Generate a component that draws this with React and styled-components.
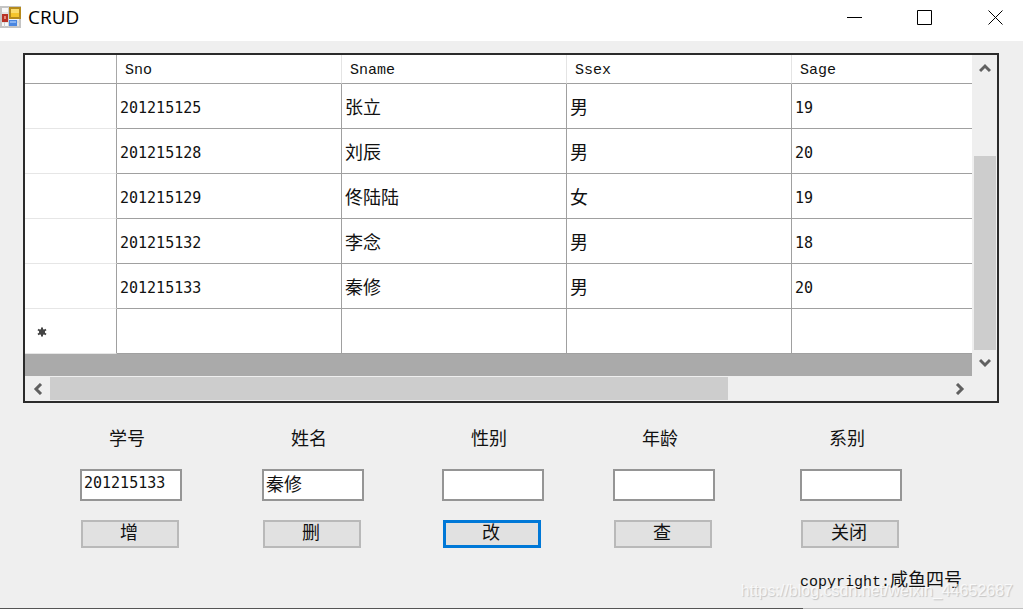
import React, { useState } from "react";
import styled, { createGlobalStyle } from "styled-components";

const GlobalStyle = createGlobalStyle`
  * {
    box-sizing: border-box;
  }
  body {
    margin: 0;
    background: #efefef;
    color: #111;
    font-family: "Liberation Mono", "Noto Sans CJK SC", monospace;
    font-size: 15px;
  }
`;

const Window = styled.div`
  display: flex;
  flex-direction: column;
  min-height: 100vh;
  overflow: hidden;
`;

const TitleBar = styled.header`
  display: flex;
  align-items: center;
  height: 41px;
  padding-bottom: 7px;
  background: #fff;
`;

const Title = styled.h1`
  flex: 1;
  margin: 0 0 0 7px;
  color: #000;
  font-family: "Open Sans", "Noto Sans", sans-serif;
  font-size: 19px;
  font-weight: 400;
  line-height: 24px;
`;

const WindowButtons = styled.div`
  display: flex;
`;

const WindowButton = styled.button`
  display: flex;
  align-items: center;
  justify-content: center;
  width: 70px;
  height: 34px;
  padding: 0;
  border: 0;
  background: none;
  &:last-child {
    width: 63px;
    padding-left: 8px;
  }
`;

const Content = styled.main`
  display: flex;
  flex: 1;
  flex-direction: column;
  padding: 12px 24px 12px 23px;
`;

const GridFrame = styled.section`
  display: grid;
  grid-template-columns: 1fr 25px;
  grid-template-rows: auto 25px;
  border: 2px solid #2b2b2b;
  background: #efefef;
`;

const GridView = styled.div`
  height: 321px;
  overflow: hidden;
  background: #aaa;
`;

const Table = styled.table`
  width: 100%;
  border-collapse: separate;
  border-spacing: 0;
  table-layout: fixed;
  background: #fff;
`;

const HeadCell = styled.th`
  width: ${(props) => (props.$marker ? "92px" : props.$last ? "auto" : "225px")};
  height: 29px;
  padding: 4px 8px 0;
  border-right: ${(props) =>
    props.$last ? "0" : `1px solid ${props.$marker ? "#a8a8a8" : "#e4e4e4"}`};
  border-bottom: 1px solid #a0a0a0;
  font-weight: 400;
  line-height: 20px;
  text-align: left;
`;

const RowMarker = styled.th`
  height: 45px;
  padding: 4px 12px 0;
  border-right: 1px solid #a0a0a0;
  border-bottom: 1px solid #e6e6e6;
  text-align: left;
`;

const Cell = styled.td`
  height: 45px;
  padding: 4px 3px 0;
  border-right: ${(props) => (props.$last ? "0" : "1px solid #a0a0a0")};
  border-bottom: 1px solid #a0a0a0;
  font-family: "DejaVu Sans Mono", "Noto Sans CJK SC", monospace;
  font-size: ${(props) => (props.$cjk ? "18px" : "15px")};
  line-height: 24px;
`;

const ScrollTrack = styled.div`
  display: flex;
  flex-direction: ${(props) => (props.$vertical ? "column" : "row")};
  padding: ${(props) => (props.$vertical ? "0 1px 0 2px" : "1px 0")};
`;

const ScrollArrow = styled.button`
  display: flex;
  flex: none;
  align-items: center;
  justify-content: center;
  width: ${(props) => (props.$vertical ? "21px" : "25px")};
  height: ${(props) => (props.$vertical ? "26px" : "23px")};
  padding: 0;
  border: 0;
  background: none;
`;

const ScrollRail = styled.div`
  display: flex;
  flex: 1;
  flex-direction: ${(props) => (props.$vertical ? "column" : "row")};
  justify-content: ${(props) => (props.$vertical ? "flex-end" : "flex-start")};
`;

const ScrollThumb = styled.div`
  flex: 0 0 ${(props) => (props.$vertical ? "72%" : "75.6%")};
  background: #cdcdcd;
`;

const Fields = styled.form`
  display: grid;
  grid-template-columns: 182fr 180fr 171fr 187fr 103fr;
  padding: 24px 96px 0 57px;
`;

const Field = styled.div`
  display: flex;
  flex-direction: column;
  align-items: flex-start;
`;

const Label = styled.label`
  padding-left: 29px;
  font-size: 18px;
  line-height: 26px;
`;

const TextBox = styled.input`
  width: 102px;
  height: 32px;
  margin-top: 16px;
  padding: 0 2px 4px;
  border: 2px solid #959595;
  border-radius: 0;
  outline: 0;
  background: #fff;
  color: #111;
  font-family: "DejaVu Sans Mono", "Noto Sans CJK SC", monospace;
  font-size: ${(props) => (props.$cjk ? "18px" : "15px")};
`;

const ActionButton = styled.button`
  width: 98px;
  height: 28px;
  margin: 19px 0 0 1px;
  padding: 1px 2px 0 0;
  border: ${(props) => (props.$active ? "3px solid #0078d7" : "2px solid #b9b9b9")};
  background: #e1e1e1;
  color: #111;
  font-family: inherit;
  font-size: 18px;
  line-height: 21px;
`;

const Footer = styled.footer`
  position: relative;
  margin-top: 20px;
  padding-right: 37px;
  line-height: 26px;
  text-align: right;
  white-space: nowrap;
`;

const Author = styled.span`
  font-size: 18px;
`;

const Watermark = styled.span`
  position: absolute;
  top: 11px;
  right: -14px;
  color: rgba(255, 255, 255, 0.75);
  font-family: "Liberation Sans", Arial, sans-serif;
  font-size: 16px;
  line-height: 24px;
  text-shadow: 1px 1px 1px rgba(0, 0, 0, 0.18);
`;

const Backdrop = styled.div`
  display: flex;
  height: 2px;
  background: #c0c0c0;
`;

const BackdropPanel = styled.div`
  width: 78.5%;
  background: #555;
`;

const columns = ["Sno", "Sname", "Ssex", "Sage"];

const rows = [
  ["201215125", "张立", "男", "19"],
  ["201215128", "刘辰", "男", "20"],
  ["201215129", "佟陆陆", "女", "19"],
  ["201215132", "李念", "男", "18"],
  ["201215133", "秦修", "男", "20"],
  ["", "", "", ""],
];

const fields = [
  { name: "sno", label: "学号", action: "增" },
  { name: "sname", label: "姓名", action: "删", cjk: true },
  { name: "ssex", label: "性别", action: "改", cjk: true, active: true },
  { name: "sage", label: "年龄", action: "查" },
  { name: "sdept", label: "系别", action: "关闭" },
];

const arrows = {
  up: "M1 9 L6 4 L11 9",
  down: "M1 3 L6 8 L11 3",
  left: "M9 1 L4 6 L9 11",
  right: "M3 1 L8 6 L3 11",
};

const Arrow = ({ direction }) => (
  <svg width="12" height="12" viewBox="0 0 12 12" fill="none">
    <path d={arrows[direction]} stroke="#606060" strokeWidth="3" />
  </svg>
);

const NewRowIcon = () => (
  <svg width="10" height="10" viewBox="0 0 10 10">
    <path
      d="M5 .5v9M1 2.5l8 5M9 2.5l-8 5"
      stroke="#444"
      strokeWidth="2"
    />
    <circle cx="5" cy="5" r="3" fill="#444" />
  </svg>
);

const AppIcon = () => (
  <svg width="21" height="22" viewBox="0 0 21 22">
    <path d="M1 1h19v20H1z" fill="#f8f8f8" stroke="#c4c4c4" strokeWidth="2" />
    <path d="M8.5 1v20M1 7h8M1 16h19M4.5 16v5M18 14v7" stroke="#cfcfcf" />
    <rect x="2" y="8" width="6" height="8" fill="#b83226" />
    <rect x="4" y="10" width="2" height="3" fill="#e58a78" />
    <rect x="10" y="2" width="10" height="10" fill="#f5c52c" stroke="#b58a1c" strokeWidth="2" />
    <path d="M11 3h8v4h-8z" fill="#fbdc6c" />
    <rect x="9" y="14" width="8" height="6" fill="#4a86e0" />
    <path d="M10 15h6v2h-6z" fill="#86b2f2" />
  </svg>
);

const App = () => {
  const [values, setValues] = useState({
    sno: "201215133",
    sname: "秦修",
    ssex: "",
    sage: "",
    sdept: "",
  });

  const handleChange = (e) => {
    const { name, value } = e.target;
    setValues((prev) => ({ ...prev, [name]: value }));
  };

  return (
    <Window>
      <GlobalStyle />
      <TitleBar>
        <AppIcon />
        <Title>CRUD</Title>
        <WindowButtons>
          <WindowButton type="button" aria-label="最小化">
            <svg width="16" height="16" viewBox="0 0 16 16">
              <path d="M0 8.5h15" stroke="#000" />
            </svg>
          </WindowButton>
          <WindowButton type="button" aria-label="最大化">
            <svg width="16" height="16" viewBox="0 0 16 16">
              <path d="M.5 1.5h14v14H.5z" fill="none" stroke="#000" />
            </svg>
          </WindowButton>
          <WindowButton type="button" aria-label="关闭窗口">
            <svg width="16" height="16" viewBox="0 0 16 16">
              <path d="M.5 1.5l14 14M14.5 1.5l-14 14" stroke="#000" />
            </svg>
          </WindowButton>
        </WindowButtons>
      </TitleBar>

      <Content>
        <GridFrame>
          <GridView>
            <Table>
              <thead>
                <tr>
                  <HeadCell $marker />
                  {columns.map((column, i) => (
                    <HeadCell key={column} $last={i === columns.length - 1}>
                      {column}
                    </HeadCell>
                  ))}
                </tr>
              </thead>
              <tbody>
                {rows.map((row, index) => (
                  <tr key={index}>
                    <RowMarker>
                      {index === rows.length - 1 && <NewRowIcon />}
                    </RowMarker>
                    {row.map((value, i) => (
                      <Cell
                        key={i}
                        $cjk={i === 1 || i === 2}
                        $last={i === row.length - 1}
                      >
                        {value}
                      </Cell>
                    ))}
                  </tr>
                ))}
              </tbody>
            </Table>
          </GridView>
          <ScrollTrack $vertical>
            <ScrollArrow $vertical type="button" aria-label="向上">
              <Arrow direction="up" />
            </ScrollArrow>
            <ScrollRail $vertical>
              <ScrollThumb $vertical />
            </ScrollRail>
            <ScrollArrow $vertical type="button" aria-label="向下">
              <Arrow direction="down" />
            </ScrollArrow>
          </ScrollTrack>
          <ScrollTrack>
            <ScrollArrow type="button" aria-label="向左">
              <Arrow direction="left" />
            </ScrollArrow>
            <ScrollRail>
              <ScrollThumb />
            </ScrollRail>
            <ScrollArrow type="button" aria-label="向右">
              <Arrow direction="right" />
            </ScrollArrow>
          </ScrollTrack>
        </GridFrame>

        <Fields onSubmit={(e) => e.preventDefault()}>
          {fields.map((field) => (
            <Field key={field.name}>
              <Label htmlFor={field.name}>{field.label}</Label>
              <TextBox
                id={field.name}
                name={field.name}
                value={values[field.name]}
                onChange={handleChange}
                $cjk={field.cjk}
              />
              <ActionButton type="button" $active={field.active}>
                {field.action}
              </ActionButton>
            </Field>
          ))}
        </Fields>

        <Footer>
          copyright:<Author>咸鱼四号</Author>
          <Watermark>https://blog.csdn.net/weixin_44652687</Watermark>
        </Footer>
      </Content>
      <Backdrop>
        <BackdropPanel />
      </Backdrop>
    </Window>
  );
};

export default App;
